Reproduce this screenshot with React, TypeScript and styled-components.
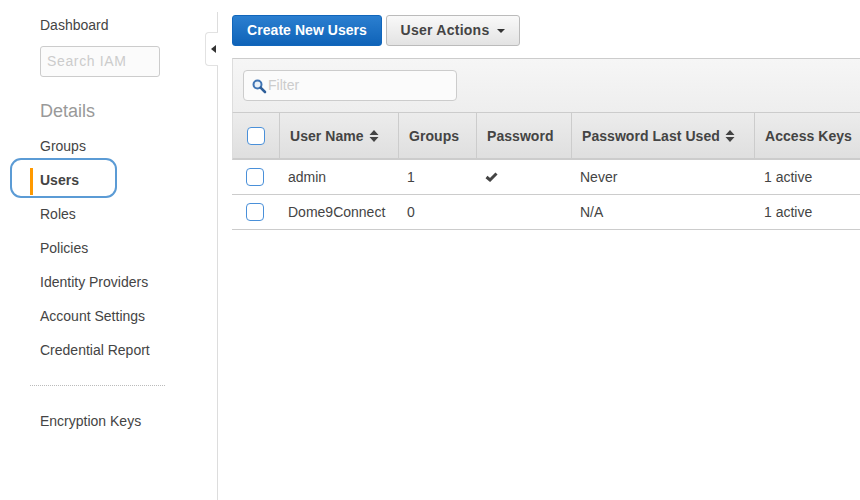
import React from "react";
import styled, { createGlobalStyle } from "styled-components";

const GlobalStyle = createGlobalStyle`
  html, body {
    margin: 0;
    padding: 0;
    background: #fff;
    overflow: hidden;
  }
  body {
    font-family: "Liberation Sans", Arial, sans-serif;
    font-size: 14px;
    color: #444;
  }
`;

const COLUMNS = "119px 78px 95px 183px 1fr";

const Page = styled.div`
  display: flex;
  width: 860px;
  height: 500px;
  overflow: hidden;
`;

const Sidebar = styled.aside`
  position: relative;
  box-sizing: border-box;
  flex: none;
  width: 218px;
  height: 488px;
  margin-top: 12px;
  padding-left: 30px;
  border-right: 1px solid #ddd;
`;

const NavItem = styled.div<{ $active?: boolean }>`
  position: relative;
  box-sizing: border-box;
  height: 34px;
  padding-left: 10px;
  line-height: 34px;
  font-weight: ${(p) => (p.$active ? "bold" : "normal")};
  color: #444;
  white-space: nowrap;

  ${(p) =>
    p.$active &&
    `
    &::before {
      content: "";
      position: absolute;
      left: 0;
      top: 5px;
      width: 3px;
      height: 27px;
      background: #f90;
    }
    &::after {
      content: "";
      position: absolute;
      left: -20px;
      top: -5px;
      width: 103px;
      height: 36px;
      border: 2px solid #5b9bd5;
      border-radius: 11px;
    }
  `}
`;

const TopItem = styled(NavItem)`
  height: 26px;
  line-height: 26px;
`;

const SearchBox = styled.div`
  box-sizing: border-box;
  width: 120px;
  height: 31px;
  margin: 8px 0 0 10px;
  padding-left: 6px;
  border: 1px solid #ccc;
  border-radius: 3px;
  background: #fbfbfb;
  color: #ccc;
  font-size: 14px;
  letter-spacing: 0.65px;
  line-height: 29px;
`;

const SectionTitle = styled.div`
  height: 20px;
  margin: 24px 0 8px 10px;
  color: #999;
  font-size: 18px;
  line-height: 20px;
`;

const Divider = styled.div`
  width: 135px;
  margin: 18px 0 18px;
  border-top: 1px dotted #bbb;
`;

const CollapseTab = styled.div`
  position: absolute;
  top: 20px;
  right: -1px;
  display: flex;
  align-items: center;
  box-sizing: border-box;
  width: 13px;
  height: 34px;
  padding-left: 5px;
  border: 1px solid #e2e2e2;
  border-right: none;
  border-radius: 4px 0 0 4px;
  background: #fff;

  &::before {
    content: "";
    border-style: solid;
    border-width: 4px 5px 4px 0;
    border-color: transparent #333 transparent transparent;
  }
`;

const Main = styled.main`
  flex: none;
  width: 642px;
  padding: 15px 0 0 14px;
  box-sizing: border-box;
`;

const Toolbar = styled.div`
  display: flex;
  gap: 4px;
  margin-bottom: 12px;
`;

const PrimaryButton = styled.button`
  box-sizing: border-box;
  width: 150px;
  height: 31px;
  padding: 0 0 2px;
  border: 1px solid #1166bb;
  border-radius: 3px;
  background: linear-gradient(#2b7fd0, #0f63b8);
  color: #fff;
  font-family: inherit;
  font-size: 14px;
  font-weight: bold;
  letter-spacing: 0.05px;
`;

const SecondaryButton = styled.button`
  display: flex;
  align-items: center;
  justify-content: center;
  gap: 8px;
  box-sizing: border-box;
  width: 134px;
  height: 31px;
  padding: 0 0 2px;
  border: 1px solid #bbb;
  border-radius: 3px;
  background: linear-gradient(#f9f9f9, #e3e3e3);
  color: #444;
  font-family: inherit;
  font-size: 14px;
  font-weight: bold;
  letter-spacing: 0.25px;

  &::after {
    content: "";
    margin-top: 2px;
    border-style: solid;
    border-width: 4px 4px 0;
    border-color: #333 transparent transparent;
  }
`;

const Panel = styled.section`
  width: 100%;
`;

const FilterBar = styled.div`
  box-sizing: border-box;
  height: 55px;
  padding: 11px 10px;
  border-top: 1px solid #ccc;
  border-left: 1px solid #ddd;
  border-bottom: 1px solid #ccc;
  background: linear-gradient(#f6f6f6, #eee);
`;

const FilterBox = styled.div`
  display: flex;
  align-items: center;
  gap: 1px;
  box-sizing: border-box;
  width: 214px;
  height: 31px;
  padding: 0 0 2px 7px;
  border: 1px solid #ccc;
  border-radius: 4px;
  background: #fbfbfb;
  color: #ccc;
  font-size: 14px;
`;

const HeaderRow = styled.div`
  display: grid;
  grid-template-columns: 46px ${COLUMNS};
  height: 47px;
  border-left: 1px solid #ddd;
  border-bottom: 2px solid #ccc;
  box-sizing: border-box;
  background: linear-gradient(#ececec, #dfdfdf);
`;

const HeaderCell = styled.div`
  display: flex;
  align-items: center;
  gap: 5px;
  box-sizing: border-box;
  padding-left: 10px;
  border-left: 1px solid #ccc;
  color: #444;
  font-weight: bold;
  letter-spacing: 0.05px;
  white-space: nowrap;

  &:first-child {
    border-left: none;
    padding-left: 14px;
  }
`;

const Row = styled.div`
  display: grid;
  grid-template-columns: 47px ${COLUMNS};
  height: 35px;
  box-sizing: border-box;
  border-bottom: 1px solid #ccc;
  align-items: center;
`;

const Cell = styled.div`
  padding-left: 9px;
  color: #444;
  white-space: nowrap;

  &:first-child {
    display: flex;
    padding-left: 14px;
  }
  &:last-child {
    padding-left: 10px;
  }
`;

const Check = styled.span`
  box-sizing: border-box;
  display: block;
  width: 18px;
  height: 18px;
  border: 1px solid #4a90d9;
  border-radius: 4px;
  background: #fff;
`;

const SearchIcon = () => (
  <svg width="16" height="16" viewBox="0 0 16 16" style={{ marginTop: 2 }}>
    <circle cx="6.5" cy="6.5" r="4" fill="#eaf1f8" stroke="#3f74b3" strokeWidth="2" />
    <path d="M9.6 9.6 L14 14" stroke="#2f5f99" strokeWidth="2.6" strokeLinecap="round" />
  </svg>
);

const SortIcon = () => (
  <svg width="10" height="12" viewBox="0 0 10 12">
    <path d="M5 0 L9.5 5 H0.5 Z M0.5 7 H9.5 L5 12 Z" fill="#444" />
  </svg>
);

const CheckMark = () => (
  <svg width="13" height="10" viewBox="0 0 13 10" style={{ display: "block" }}>
    <path d="M1.5 5 L5 8 L11.5 1.5" fill="none" stroke="#444" strokeWidth="3" />
  </svg>
);

const navItems = ["Roles", "Policies", "Identity Providers", "Account Settings", "Credential Report"];

const users = [
  { name: "admin", groups: "1", password: true, lastUsed: "Never", keys: "1 active" },
  { name: "Dome9Connect", groups: "0", password: false, lastUsed: "N/A", keys: "1 active" },
];

export default function App() {
  return (
    <Page>
      <GlobalStyle />
      <Sidebar>
        <TopItem>Dashboard</TopItem>
        <SearchBox>Search IAM</SearchBox>
        <SectionTitle>Details</SectionTitle>
        <NavItem>Groups</NavItem>
        <NavItem $active>Users</NavItem>
        {navItems.map((item) => (
          <NavItem key={item}>{item}</NavItem>
        ))}
        <Divider />
        <NavItem>Encryption Keys</NavItem>
        <CollapseTab />
      </Sidebar>
      <Main>
        <Toolbar>
          <PrimaryButton>Create New Users</PrimaryButton>
          <SecondaryButton>User Actions</SecondaryButton>
        </Toolbar>
        <Panel>
          <FilterBar>
            <FilterBox>
              <SearchIcon />
              Filter
            </FilterBox>
          </FilterBar>
          <HeaderRow>
            <HeaderCell>
              <Check />
            </HeaderCell>
            <HeaderCell>
              User Name <SortIcon />
            </HeaderCell>
            <HeaderCell>Groups</HeaderCell>
            <HeaderCell>Password</HeaderCell>
            <HeaderCell>
              Password Last Used <SortIcon />
            </HeaderCell>
            <HeaderCell>Access Keys</HeaderCell>
          </HeaderRow>
          {users.map((user) => (
            <Row key={user.name}>
              <Cell>
                <Check />
              </Cell>
              <Cell>{user.name}</Cell>
              <Cell>{user.groups}</Cell>
              <Cell>{user.password && <CheckMark />}</Cell>
              <Cell>{user.lastUsed}</Cell>
              <Cell>{user.keys}</Cell>
            </Row>
          ))}
        </Panel>
      </Main>
    </Page>
  );
}
